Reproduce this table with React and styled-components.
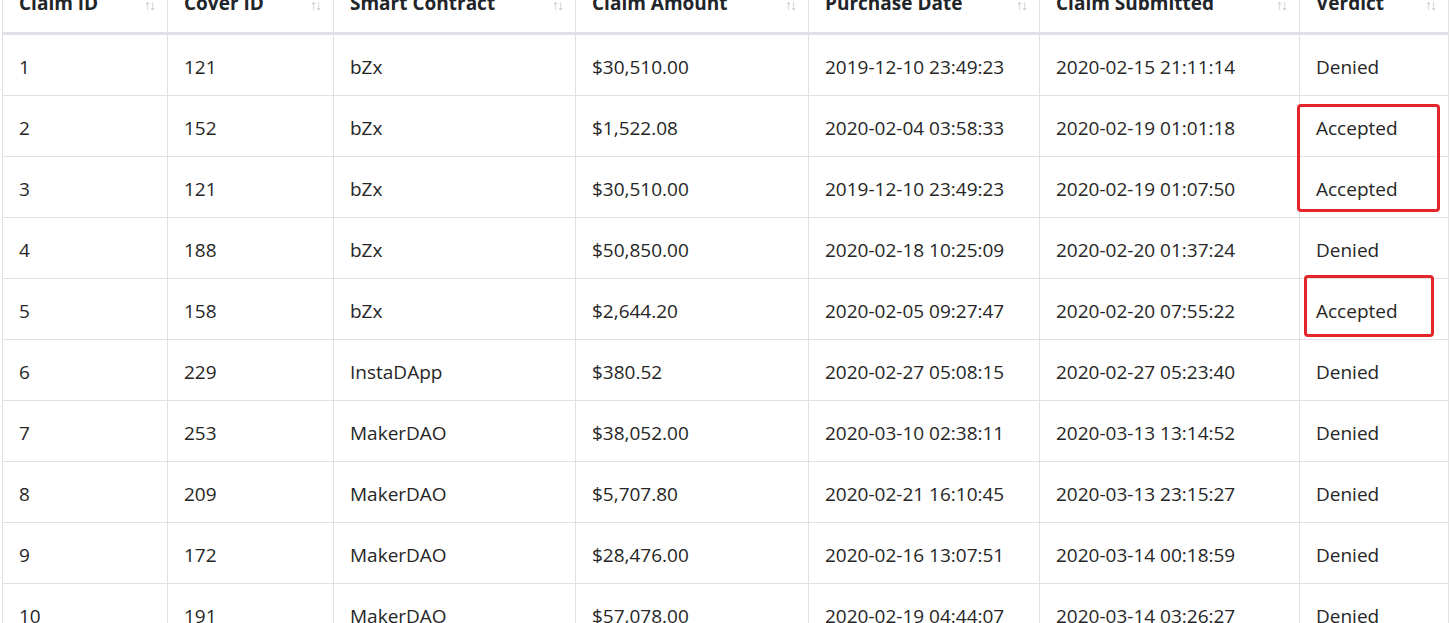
import React from 'react';
import styled, {createGlobalStyle} from 'styled-components';

const GlobalStyle = createGlobalStyle`
  html, body {
    margin: 0;
    padding: 0;
    background: #fff;
  }
  body {
    font-family: "Open Sans", "Noto Sans", "Liberation Sans", sans-serif;
    color: #212529;
  }
`

const Page = styled.div`
  position: relative;
  height: 100vh;
  overflow: hidden;
  padding-left: 2px;
`

const Table = styled.table`
  border-collapse: collapse;
  table-layout: fixed;
  width: 1446px;
  margin-top: -27px;
  font-size: 19px;
  line-height: 28px;
`

const Th = styled.th`
  position: relative;
  text-align: left;
  vertical-align: bottom;
  font-weight: 700;
  padding: 16px 16px 15px 16px;
  border: 1px solid #dee2e6;
  border-top: none;
  border-bottom: 3px solid #dee2e6;
  color: #212529;
`

const SortCaret = styled.span`
  position: absolute;
  right: 13px;
  bottom: 20px;
  font-size: 14px;
  line-height: 14px;
  letter-spacing: -2px;
  color: #c4c4c4;
  font-weight: 400;
`

const Td = styled.td`
  padding: 18px 16px 14px 16px;
  border: 1px solid #dee2e6;
  font-weight: 400;
  color: #262626;
  white-space: nowrap;
`

const Mark = styled.div`
  position: absolute;
  border: 3px solid #e3262a;
  border-radius: 4px;
  pointer-events: none;
`

const columns = [
  {label: 'Claim ID', width: 165},
  {label: 'Cover ID', width: 166},
  {label: 'Smart Contract', width: 242},
  {label: 'Claim Amount', width: 233},
  {label: 'Purchase Date', width: 231},
  {label: 'Claim Submitted', width: 260},
  {label: 'Verdict', width: 149},
];

const claims = [
  [1, 121, 'bZx', '$30,510.00', '2019-12-10 23:49:23', '2020-02-15 21:11:14', 'Denied'],
  [2, 152, 'bZx', '$1,522.08', '2020-02-04 03:58:33', '2020-02-19 01:01:18', 'Accepted'],
  [3, 121, 'bZx', '$30,510.00', '2019-12-10 23:49:23', '2020-02-19 01:07:50', 'Accepted'],
  [4, 188, 'bZx', '$50,850.00', '2020-02-18 10:25:09', '2020-02-20 01:37:24', 'Denied'],
  [5, 158, 'bZx', '$2,644.20', '2020-02-05 09:27:47', '2020-02-20 07:55:22', 'Accepted'],
  [6, 229, 'InstaDApp', '$380.52', '2020-02-27 05:08:15', '2020-02-27 05:23:40', 'Denied'],
  [7, 253, 'MakerDAO', '$38,052.00', '2020-03-10 02:38:11', '2020-03-13 13:14:52', 'Denied'],
  [8, 209, 'MakerDAO', '$5,707.80', '2020-02-21 16:10:45', '2020-03-13 23:15:27', 'Denied'],
  [9, 172, 'MakerDAO', '$28,476.00', '2020-02-16 13:07:51', '2020-03-14 00:18:59', 'Denied'],
  [10, 191, 'MakerDAO', '$57,078.00', '2020-02-19 04:44:07', '2020-03-14 03:26:27', 'Denied'],
];

export default function App() {
  return (
    <>
      <GlobalStyle />
      <Page>
        <Table>
          <colgroup>
            {columns.map(c => <col key={c.label} style={{width: c.width}} />)}
          </colgroup>
          <thead>
            <tr>
              {columns.map(c => (
                <Th key={c.label}>
                  {c.label}
                  <SortCaret>↑↓</SortCaret>
                </Th>
              ))}
            </tr>
          </thead>
          <tbody>
            {claims.map(row => (
              <tr key={row[0]}>
                {row.map((v, i) => <Td key={i}>{v}</Td>)}
              </tr>
            ))}
          </tbody>
        </Table>
        {/* red annotation boxes drawn over the verdict column */}
        <Mark style={{left: 1297, top: 104, width: 137, height: 102}} />
        <Mark style={{left: 1304, top: 275, width: 124, height: 56}} />
      </Page>
    </>
  );
}
